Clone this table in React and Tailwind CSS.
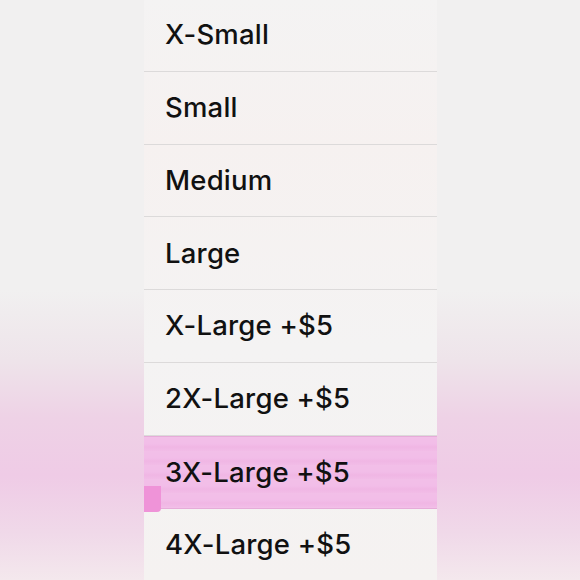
const sizes = [
  "X-Small",
  "Small",
  "Medium",
  "Large",
  "X-Large +$5",
  "2X-Large +$5",
  "3X-Large +$5",
  "4X-Large +$5",
];

const App = () => {
  return (
    <div className="w-[580px] h-[580px] overflow-hidden bg-[linear-gradient(to_bottom,#f1f0f0_0%,#f1f0f0_50%,#eee4ea_62%,#eed2e6_72%,#efcbe6_82%,#f0d9e9_92%,#f4e8ed_100%)] font-['Inter','Liberation_Sans',sans-serif]">
      <div className="ml-[144px] w-[293px] -mt-[1px] bg-[linear-gradient(to_bottom,#f4f3f3_0%,#f6f1f0_25%,#f4f3f3_60%,#f5f2f1_100%)]">
        {sizes.map((size) => {
          const selected = size === "3X-Large +$5";
          return (
            <div
              key={size}
              className={
                selected
                  ? "relative h-[72.8px] flex items-center pl-[21px] border-y border-[#e6acd9] bg-[repeating-linear-gradient(to_bottom,#f2bfe8_0px,#f2bde8_7px,#f0b6e4_10px,#f2bce7_14px)]"
                  : "h-[72.8px] flex items-center pl-[21px] border-b border-[#dcdada]"
              }
            >
              <span className="text-[27.5px] font-medium text-[#111] tracking-[0.2px]">
                {size}
              </span>
              {selected && (
                <div className="absolute left-0 bottom-[-4px] w-[17px] h-[26px] bg-[#ef93d8] rounded-br-[4px] blur-[0.6px]"></div>
              )}
            </div>
          );
        })}
      </div>
    </div>
  );
};

export default App;
